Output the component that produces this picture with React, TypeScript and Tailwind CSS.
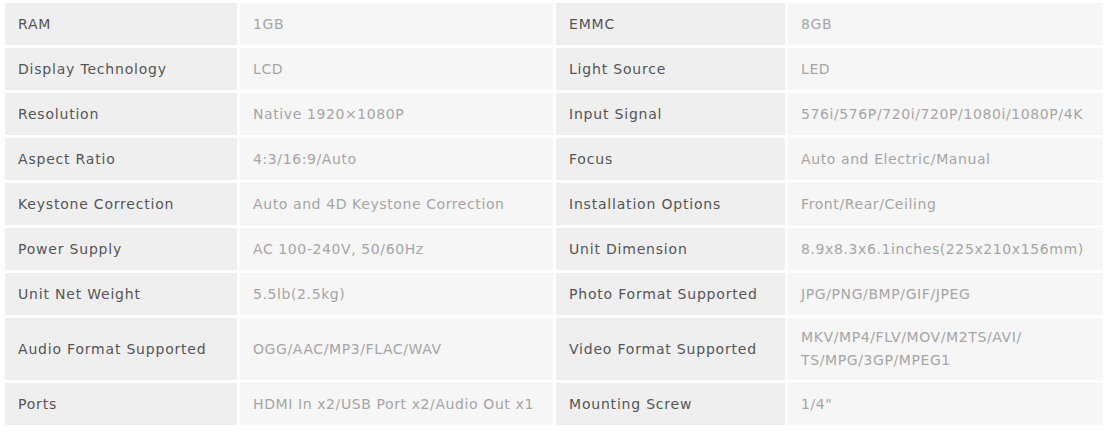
import React from "react";

type Row = { l1: string; v1: React.ReactNode; l2: string; v2: React.ReactNode };

const rows: Row[] = [
  { l1: "RAM", v1: "1GB", l2: "EMMC", v2: "8GB" },
  { l1: "Display Technology", v1: "LCD", l2: "Light Source", v2: "LED" },
  { l1: "Resolution", v1: "Native 1920×1080P", l2: "Input Signal", v2: "576i/576P/720i/720P/1080i/1080P/4K" },
  { l1: "Aspect Ratio", v1: "4:3/16:9/Auto", l2: "Focus", v2: "Auto and Electric/Manual" },
  { l1: "Keystone Correction", v1: "Auto and 4D Keystone Correction", l2: "Installation Options", v2: "Front/Rear/Ceiling" },
  { l1: "Power Supply", v1: "AC 100-240V, 50/60Hz", l2: "Unit Dimension", v2: "8.9x8.3x6.1inches(225x210x156mm)" },
  { l1: "Unit Net Weight", v1: "5.5lb(2.5kg)", l2: "Photo Format Supported", v2: "JPG/PNG/BMP/GIF/JPEG" },
  {
    l1: "Audio Format Supported",
    v1: "OGG/AAC/MP3/FLAC/WAV",
    l2: "Video Format Supported",
    v2: (
      <>
        MKV/MP4/FLV/MOV/M2TS/AVI/
        <br />
        TS/MPG/3GP/MPEG1
      </>
    ),
  },
  { l1: "Ports", v1: "HDMI In x2/USB Port x2/Audio Out x1", l2: "Mounting Screw", v2: "1/4\"" },
];

function Label({ children }: { children: React.ReactNode }) {
  return (
    <div className="flex min-h-[42px] items-center bg-[#efefef] px-[13px] text-[14px] tracking-[0.8px] text-[#555555]">
      {children}
    </div>
  );
}

function Value({ children }: { children: React.ReactNode }) {
  return (
    <div className="flex min-h-[42px] items-center bg-[#f6f6f6] px-[13px] py-[8px] text-[14px] leading-[23px] tracking-[0.6px] text-[#a5a5a5]">
      <div>{children}</div>
    </div>
  );
}

export default function App() {
  return (
    <div
      className="h-[437px] w-[1112px] bg-white pl-[5px] pt-[3px]"
      style={{ fontFamily: '"DejaVu Sans", "Open Sans", sans-serif' }}
    >
      <div className="grid grid-cols-[232px_313px_229px_315px] gap-[3px]">
        {rows.map((r, i) => (
          <React.Fragment key={i}>
            <Label>{r.l1}</Label>
            <Value>{r.v1}</Value>
            <Label>{r.l2}</Label>
            <Value>{r.v2}</Value>
          </React.Fragment>
        ))}
      </div>
    </div>
  );
}
